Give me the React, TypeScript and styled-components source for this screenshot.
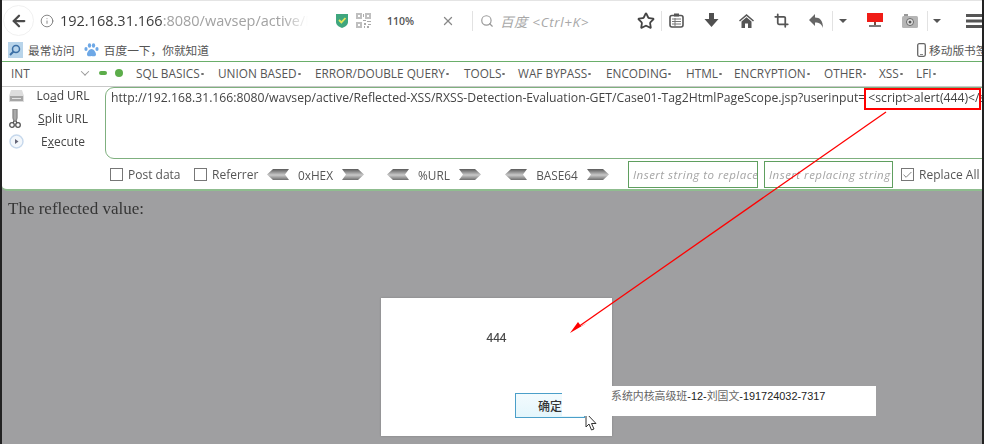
import React from "react"
import styled, { createGlobalStyle } from "styled-components"
import { ArrowLeft, Info, X, Search, Star, Crop, Check } from "lucide-react"

const Global = createGlobalStyle`
  html, body {
    margin: 0;
    padding: 0;
    background: #fff;
  }
`

const Frame = styled.div`
  position: relative;
  width: 984px;
  height: 444px;
  overflow: hidden;
  box-sizing: border-box;
  border-left: 2px solid #222;
  border-right: 2px solid #222;
  background: #9f9fa1;
  font-family: "Open Sans", "Noto Sans CJK SC", sans-serif;
  color: #444;
`

const Soft = styled.div`
  display: flex;
  flex-direction: column;
  height: 100%;
  filter: blur(0.35px);
`

const ToolRow = styled.div`
  height: 38px;
  flex: none;
  box-sizing: border-box;
  padding-top: 2px;
  border-top: 1px solid #e4e4e4;
  background: #fff;
  display: flex;
  align-items: center;
`

const Slot = styled.div<{ $w: number; $ml?: number }>`
  flex: none;
  width: ${p => p.$w}px;
  margin-left: ${p => p.$ml ?? 0}px;
  height: 24px;
  display: flex;
  align-items: center;
  justify-content: center;
`

const BackCircle = styled.div`
  width: 31px;
  height: 31px;
  flex: none;
  box-sizing: border-box;
  border-radius: 50%;
  border: 1px solid #f1f1f1;
  display: flex;
  align-items: center;
  justify-content: center;
  color: #4a4a4a;
`

const UrlText = styled.div`
  flex: none;
  width: 248px;
  margin-left: 5px;
  white-space: nowrap;
  font-size: 14.5px;
  color: #a2a2a2;
  mask-image: linear-gradient(to right, #000 90%, transparent 100%);

  b {
    font-weight: 400;
    color: #3c3c3c;
  }
`

const ZoomLevel = styled.div`
  flex: none;
  width: 36px;
  margin-left: 16px;
  font-size: 10.5px;
  font-weight: 600;
  color: #555;
`

const Sep = styled.div<{ $ml?: number }>`
  flex: none;
  width: 1px;
  height: 20px;
  background: #e2e2e2;
  margin-left: ${p => p.$ml ?? 0}px;
`

const SearchHint = styled.div`
  flex: none;
  width: 130px;
  margin-left: 5px;
  font-size: 13.5px;
  font-style: italic;
  color: #a8a8a8;
  letter-spacing: 0.6px;
  white-space: nowrap;
`

const Caret = styled.div`
  width: 0;
  height: 0;
  border-left: 4px solid transparent;
  border-right: 4px solid transparent;
  border-top: 4px solid #555;
`

const BookmarkRow = styled.div`
  height: 23px;
  flex: none;
  background: #fff;
  display: flex;
  align-items: center;
  padding-left: 6px;
  font-size: 11.7px;
  color: #555;
`

const Bookmark = styled.div<{ $ml?: number }>`
  display: flex;
  align-items: center;
  gap: 5px;
  margin-left: ${p => p.$ml ?? 0}px;
  white-space: nowrap;
`

const MobileMark = styled(Bookmark)`
  margin-left: auto;
  width: 65px;
  overflow: hidden;
  flex: none;
  gap: 3px;
`

const Hackbar = styled.div`
  flex: none;
  height: 130px;
  background: #fff;
  border-top: 1px solid #6aae6a;
  border-bottom: 2px solid #8fbd8f;
  border-bottom-left-radius: 5px;
  box-sizing: border-box;
  display: flex;
  flex-direction: column;
`

const MenuRow = styled.div`
  height: 25px;
  flex: none;
  box-sizing: border-box;
  padding-bottom: 2px;
  display: flex;
  align-items: center;
  border-bottom: 1px solid #c9c9c9;
  font-size: 11.8px;
  color: #555;
  white-space: nowrap;
`

const Select = styled.div`
  width: 87px;
  padding: 0 1px 0 9px;
  box-sizing: border-box;
  display: flex;
  align-items: center;
  justify-content: space-between;
  flex: none;
`

const Chevron = styled.span`
  width: 5px;
  height: 5px;
  border-right: 1px solid #999;
  border-bottom: 1px solid #999;
  transform: rotate(45deg) translate(-1px, -1px);
`

const GreenDash = styled.span`
  width: 8px;
  height: 4px;
  border-radius: 2px;
  background: #5cad4a;
  margin-left: 10px;
  flex: none;
`

const GreenDot = styled.span`
  width: 8px;
  height: 8px;
  border-radius: 50%;
  background: #5cad4a;
  margin-left: 8px;
  margin-right: 13px;
  flex: none;
`

const MenuItem = styled.span<{ $w: number }>`
  flex: none;
  width: ${p => p.$w}px;

  &::after {
    content: "";
    display: inline-block;
    width: 3px;
    height: 2px;
    border-radius: 50%;
    background: #666;
    margin-left: 1px;
    vertical-align: 3px;
  }
`

const MainRow = styled.div`
  flex: none;
  height: 73px;
  display: flex;
`

const SideCol = styled.div`
  width: 103px;
  flex: none;
  display: flex;
  flex-direction: column;
  margin-top: -3px;
`

const SideItem = styled.div`
  height: 23px;
  flex: none;
  display: grid;
  grid-template-columns: 27px 1fr;
  align-items: center;
  padding-left: 5px;
  font-size: 12px;
  color: #444;
`

const SideIcon = styled.span`
  display: flex;
  justify-content: flex-start;
  padding-left: 2px;
`

const SideLabel = styled.span`
  text-align: center;
  padding-right: 13px;
  white-space: nowrap;
`

const UrlBox = styled.div`
  flex: 1;
  min-width: 0;
  height: 72px;
  box-sizing: border-box;
  margin-right: -12px;
  border: 1px solid #7fb07f;
  border-radius: 9px;
  padding: 1px 0 0 5px;
  font-size: 12.23px;
  line-height: 18px;
  color: #444;
  white-space: nowrap;
  overflow: hidden;
`

const Payload = styled.span`
  margin-left: 3px;
`

const OptionsRow = styled.div`
  flex: 1;
  display: flex;
  align-items: center;
  font-size: 12px;
  color: #555;
  white-space: nowrap;
`

const Box = styled.span<{ $ml?: number }>`
  flex: none;
  width: 13px;
  height: 13px;
  box-sizing: border-box;
  border: 1px solid #777;
  margin-left: ${p => p.$ml ?? 0}px;
  display: flex;
  align-items: center;
  justify-content: center;
`

const OptionLabel = styled.span<{ $w?: number }>`
  flex: none;
  width: ${p => (p.$w ? `${p.$w}px` : "auto")};
  margin-left: 5px;
`

const Codec = styled.span<{ $w: number }>`
  flex: none;
  width: ${p => p.$w}px;
  text-align: center;
  font-size: 11.8px;
  color: #555;
`

const ShaftIcon = styled.svg<{ $ml?: number }>`
  flex: none;
  margin-left: ${p => p.$ml ?? 0}px;
`

const ReplaceInput = styled.div<{ $ml: number; $w: number }>`
  flex: none;
  width: ${p => p.$w}px;
  height: 27px;
  margin-left: ${p => p.$ml}px;
  box-sizing: border-box;
  border: 1px solid #5f9f5f;
  padding-left: 4px;
  font-size: 11.5px;
  line-height: 26px;
  font-style: italic;
  color: #a5a5a5;
  letter-spacing: 0.48px;
  overflow: hidden;
  white-space: nowrap;
`

const PageBody = styled.div`
  flex: 1;
  padding: 8px 0 0 6px;
  font-family: "Liberation Serif", serif;
  font-size: 17px;
  line-height: 20px;
  color: #363636;
`

const Dialog = styled.div`
  position: absolute;
  left: 379px;
  top: 298px;
  width: 231px;
  height: 138px;
  background: #fff;
  box-shadow: 0 0 2px #808082;
`

const Message = styled.div`
  position: absolute;
  left: 0;
  top: 33px;
  width: 100%;
  text-align: center;
  font-family: "Liberation Sans", sans-serif;
  font-size: 12px;
  line-height: 14px;
  color: #444;
  -webkit-text-stroke: 0.2px #444;
`

const ConfirmButton = styled.div`
  position: absolute;
  left: 134px;
  top: 95px;
  width: 70px;
  height: 25px;
  box-sizing: border-box;
  border: 1px solid #4b9fc9;
  background: linear-gradient(#f3fbfe, #e4f6fc);
  font-family: "Noto Sans CJK SC", sans-serif;
  font-size: 12px;
  font-weight: 500;
  line-height: 23px;
  text-align: center;
  color: #333;
`

const Watermark = styled.div`
  position: absolute;
  left: 560px;
  top: 386px;
  width: 314px;
  height: 30px;
  box-sizing: border-box;
  padding-left: 49px;
  background: #fff;
  font-family: "Liberation Sans", "Noto Sans CJK SC", sans-serif;
  font-size: 10.9px;
  line-height: 20px;
  color: #222;
  white-space: nowrap;
`

const WatermarkName = styled.span`
  color: #666;
`

const Annotation = styled.svg`
  position: absolute;
  left: -2px;
  top: 0;
  pointer-events: none;
`

const RedBox = styled.div`
  position: absolute;
  left: 862px;
  top: 88px;
  width: 117px;
  height: 22px;
  box-sizing: border-box;
  border: 2px solid #f00;
`

const Pointer = styled.svg`
  position: absolute;
  left: 583px;
  top: 413px;
`

const Shield = () => (
  <svg width="14" height="16" viewBox="0 0 14 16">
    <path d="M1 1h12v8c0 3-3 5-6 6-3-1-6-3-6-6z" fill="#3fa67e" />
    <path d="M4 7l2.400 2.400L10.500 5" fill="none" stroke="#e4e85a" strokeWidth="1.800" />
  </svg>
)

const Qr = () => (
  <svg width="15" height="15" viewBox="0 0 15 15" fill="#aaa">
    <path d="M0 0h6v6H0zM9 0h6v6H9zM0 9h6v6H0z" opacity="0.75" />
    <path d="M2 2h2v2H2zM11 2h2v2h-2zM2 11h2v2H2z" fill="#fff" />
    <path d="M7 1h1v3H7zM7 7h3v1H7zM11 8h4v1h-4zM8 10h2v2H8zM12 11h3v1h-3zM8 13h1v2H8zM11 13h2v2h-2z" />
  </svg>
)

const Clipboard = () => (
  <svg width="15" height="15" viewBox="0 0 15 15">
    <rect x="1" y="2.500" width="13" height="11.500" rx="2" fill="none" stroke="#555" strokeWidth="1.600" />
    <rect x="5" y="0.500" width="5" height="3" fill="#555" />
    <path d="M3 6h9M3 8.500h9M3 11h9M6 5v8" stroke="#777" strokeWidth="1" />
  </svg>
)

const Download = () => (
  <svg width="15" height="15" viewBox="0 0 15 15" fill="#505050">
    <path d="M5 0h5v6h4.500l-7 8-7-8H5z" />
  </svg>
)

const Home = () => (
  <svg width="15" height="14" viewBox="0 0 15 14" fill="#555">
    <path d="M7.500 0L15 6.500l-1 1-6.500-5.500L1 7.500l-1-1z" />
    <path d="M2.500 7.500l5-4.200 5 4.200V14H9V9.500H6V14H2.500z" />
  </svg>
)

const Undo = () => (
  <svg width="15" height="14" viewBox="0 0 15 14" fill="#666">
    <path d="M6 0v3.500c5 0 8 3 8 10.500-1.500-4-3.500-5.500-8-5.500V12L0 6z" />
  </svg>
)

const RedMonitor = () => (
  <svg width="16" height="15" viewBox="0 0 16 15">
    <rect x="0" y="0" width="16" height="9" fill="#f01c16" />
    <path d="M7 9h2v3H7z" fill="#7a4a40" />
    <path d="M2 13h12" stroke="#5a5a5a" strokeWidth="1.600" />
  </svg>
)

const Camera = () => (
  <svg width="16" height="14" viewBox="0 0 16 14">
    <rect x="0" y="2" width="16" height="12" rx="1.500" fill="#b5b5b5" />
    <rect x="2" y="0" width="4" height="2" fill="#999" />
    <circle cx="8" cy="8" r="3.500" fill="#e6e6e6" stroke="#666" strokeWidth="1" />
    <circle cx="8" cy="8" r="1.500" fill="#555" />
  </svg>
)

const Burger = () => (
  <svg width="18" height="14" viewBox="0 0 18 14" fill="#555" style={{ flex: "none" }}>
    <path d="M0 0h18v3H0zM0 5.500h18v3H0zM0 11h18v3H0z" />
  </svg>
)

const MostVisited = () => (
  <svg width="15" height="16" viewBox="0 0 15 16">
    <rect x="0" y="0" width="15" height="16" fill="#b8d4ea" />
    <circle cx="8" cy="7" r="3.500" fill="none" stroke="#3b6fa6" strokeWidth="1.500" />
    <path d="M5.500 9.500L2 13" stroke="#3b6fa6" strokeWidth="2" />
  </svg>
)

const Paw = () => (
  <svg width="15" height="14" viewBox="0 0 15 14" fill="#6ea8e6">
    <ellipse cx="2" cy="6" rx="1.600" ry="2" />
    <ellipse cx="5.500" cy="2.500" rx="1.700" ry="2.200" />
    <ellipse cx="9.500" cy="2.500" rx="1.700" ry="2.200" />
    <ellipse cx="13" cy="6" rx="1.600" ry="2" />
    <path d="M7.500 6c2 0 4.500 3 4.500 5.500 0 2-2.500 2-4.500 1.500-2 .5-4.500.5-4.500-1.500C3 9 5.500 6 7.500 6z" />
  </svg>
)

const Phone = () => (
  <svg width="9" height="14" viewBox="0 0 9 14" style={{ flex: "none" }}>
    <rect x="0.700" y="0.700" width="7.600" height="12.600" rx="1.500" fill="none" stroke="#666" strokeWidth="1.300" />
    <path d="M3 11.500h3" stroke="#888" />
  </svg>
)

const Drive = () => (
  <svg width="15" height="14" viewBox="0 0 15 14">
    <path d="M2 1h11l2 6v6H0V7z" fill="#ddd" />
    <rect x="1" y="7" width="13" height="5" fill="#a5a5a5" />
    <path d="M3 9.500h9" stroke="#e4e4e4" />
  </svg>
)

const Scissors = () => (
  <svg width="12" height="20" viewBox="0 0 12 20" fill="none" stroke="#555" strokeWidth="1.300">
    <path d="M4 0h4v9l-1 3H5L4 9z" fill="#aaa" stroke="#888" />
    <circle cx="3" cy="16" r="2.300" />
    <circle cx="9" cy="16" r="2.300" />
    <path d="M5 12l-1 2M7 12l1 2" />
  </svg>
)

const Play = () => (
  <svg width="15" height="15" viewBox="0 0 15 15">
    <circle cx="7.500" cy="7.500" r="6.500" fill="#f3f7fb" stroke="#c6d8ec" strokeWidth="1.400" />
    <path d="M6 5l3.500 2.500L6 10z" fill="#667" />
  </svg>
)

const Shaft = ({ flip, ml }: { flip?: boolean; ml?: number }) => (
  <ShaftIcon $ml={ml} width="22" height="11" viewBox="0 0 22 11">
    <defs>
      <linearGradient id="steel" x1="0" y1="0" x2="0" y2="1">
        <stop offset="0" stopColor="#5a5a5a" />
        <stop offset="0.55" stopColor="#c9c9c9" />
        <stop offset="1" stopColor="#6e6e6e" />
      </linearGradient>
    </defs>
    <path
      d={flip ? "M0 0h16l6 5.500-6 5.500H0l4-5.500z" : "M22 0H6L0 5.500 6 11h16l-4-5.500z"}
      fill="url(#steel)"
    />
  </ShaftIcon>
)

const menu: [string, number][] = [
  ["SQL BASICS", 82],
  ["UNION BASED", 97],
  ["ERROR/DOUBLE QUERY", 149],
  ["TOOLS", 54],
  ["WAF BYPASS", 88],
  ["ENCODING", 80],
  ["HTML", 48],
  ["ENCRYPTION", 90],
  ["OTHER", 55],
  ["XSS", 37],
  ["LFI", 30],
]

const targetUrl =
  "http://192.168.31.166:8080/wavsep/active/Reflected-XSS/RXSS-Detection-Evaluation-GET/Case01-Tag2HtmlPageScope.jsp?userinput="

const App = () => {
  return (
    <Frame>
      <Global />
      <Soft>
        <ToolRow>
          <Slot $w={31} $ml={1}>
            <BackCircle>
              <ArrowLeft size={18} strokeWidth={3} />
            </BackCircle>
          </Slot>
          <Slot $w={16} $ml={5}>
            <Info size={14} strokeWidth={1.5} color="#777" />
          </Slot>
          <UrlText>
            <b>192.168.31.166</b>:8080/wavsep/active/R
          </UrlText>
          <Slot $w={16} $ml={26}>
            <Shield />
          </Slot>
          <Slot $w={16} $ml={5}>
            <Qr />
          </Slot>
          <ZoomLevel>110%</ZoomLevel>
          <Slot $w={14} $ml={18}>
            <X size={14} strokeWidth={2.2} color="#888" />
          </Slot>
          <Sep $ml={17} />
          <Slot $w={16} $ml={6}>
            <Search size={14} strokeWidth={2} color="#999" />
          </Slot>
          <SearchHint>百度 &lt;Ctrl+K&gt;</SearchHint>
          <Slot $w={20} $ml={6}>
            <Star size={18} strokeWidth={2.4} color="#444" />
          </Slot>
          <Sep $ml={5} />
          <Slot $w={20} $ml={4}>
            <Clipboard />
          </Slot>
          <Slot $w={20} $ml={15}>
            <Download />
          </Slot>
          <Slot $w={20} $ml={15}>
            <Home />
          </Slot>
          <Slot $w={20} $ml={15}>
            <Crop size={15} strokeWidth={2.8} color="#555" />
          </Slot>
          <Slot $w={20} $ml={15}>
            <Undo />
          </Slot>
          <Sep $ml={6} />
          <Slot $w={8} $ml={6}>
            <Caret />
          </Slot>
          <Slot $w={20} $ml={18}>
            <RedMonitor />
          </Slot>
          <Slot $w={20} $ml={15}>
            <Camera />
          </Slot>
          <Sep $ml={7} />
          <Slot $w={8} $ml={5}>
            <Caret />
          </Slot>
          <Slot $w={18} $ml={25}>
            <Burger />
          </Slot>
        </ToolRow>

        <BookmarkRow>
          <Bookmark>
            <MostVisited />
            最常访问
          </Bookmark>
          <Bookmark $ml={9}>
            <Paw />
            百度一下，你就知道
          </Bookmark>
          <MobileMark>
            <Phone />
            移动版书签
          </MobileMark>
        </BookmarkRow>

        <Hackbar>
          <MenuRow>
            <Select>
              INT
              <Chevron />
            </Select>
            <GreenDash />
            <GreenDot />
            {menu.map(([label, width]) => (
              <MenuItem key={label} $w={width}>
                {label}
              </MenuItem>
            ))}
          </MenuRow>

          <MainRow>
            <SideCol>
              <SideItem>
                <SideIcon>
                  <Drive />
                </SideIcon>
                <SideLabel>
                  Lo<u>a</u>d URL
                </SideLabel>
              </SideItem>
              <SideItem>
                <SideIcon>
                  <Scissors />
                </SideIcon>
                <SideLabel>
                  <u>S</u>plit URL
                </SideLabel>
              </SideItem>
              <SideItem>
                <SideIcon>
                  <Play />
                </SideIcon>
                <SideLabel>
                  E<u>x</u>ecute
                </SideLabel>
              </SideItem>
            </SideCol>
            <UrlBox>
              {targetUrl}
              <Payload>&lt;script&gt;alert(444)&lt;/script&gt;</Payload>
            </UrlBox>
          </MainRow>

          <OptionsRow>
            <Box $ml={108} />
            <OptionLabel $w={66}>Post data</OptionLabel>
            <Box />
            <OptionLabel $w={55}>Referrer</OptionLabel>
            <Shaft />
            <Codec $w={53}>0xHEX</Codec>
            <Shaft flip />
            <Shaft ml={23} />
            <Codec $w={50}>%URL</Codec>
            <Shaft flip />
            <Shaft ml={24} />
            <Codec $w={60}>BASE64</Codec>
            <Shaft flip />
            <ReplaceInput $ml={19} $w={130}>
              Insert string to replace
            </ReplaceInput>
            <ReplaceInput $ml={6} $w={129}>
              Insert replacing string
            </ReplaceInput>
            <Box $ml={8}>
              <Check size={12} strokeWidth={1.6} color="#555" />
            </Box>
            <OptionLabel>Replace All</OptionLabel>
          </OptionsRow>
        </Hackbar>

        <PageBody>The reflected value:</PageBody>

        <Dialog>
          <Message>444</Message>
          <ConfirmButton>确定</ConfirmButton>
        </Dialog>

        <Pointer width="14" height="20" viewBox="0 0 14 20">
          <path d="M1 0v14l3-3 2.500 6 2.500-1-2.500-5.500H11z" fill="#fff" stroke="#333" strokeWidth="1" />
        </Pointer>

        <Watermark>
          <WatermarkName>系统内核高级班</WatermarkName>-12-<WatermarkName>刘国文</WatermarkName>-191724032-7317
        </Watermark>

        <RedBox />
        <Annotation width="986" height="444" viewBox="0 0 986 444">
          <path d="M886 112L578 327" stroke="#f00" strokeWidth="1.300" fill="none" />
          <path d="M570 333L578 322 581 326 587 323z" fill="#f00" />
        </Annotation>
      </Soft>
    </Frame>
  )
}

export default App
